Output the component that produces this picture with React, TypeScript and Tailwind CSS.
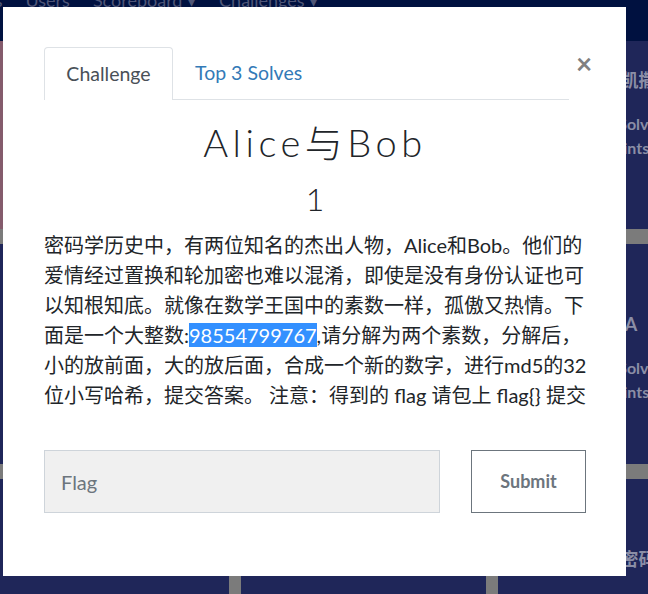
import React from 'react';

const cards = [
  { title: '签到题', solves: '3120 Solves', points: '1 points', solved: true },
  { title: 'base64', solves: '2840 Solves', points: '1 points' },
  { title: '古典凯撒', solves: '1986 Solves', points: '1 points' },
  { title: '栅栏密码', solves: '2311 Solves', points: '1 points' },
  { title: '摩斯电码', solves: '2407 Solves', points: '1 points' },
  { title: 'RSA', solves: '1750 Solves', points: '1 points' },
  { title: '换位密码', solves: '2077 Solves', points: '1 points' },
  { title: '维吉尼亚', solves: '2109 Solves', points: '1 points' },
  { title: '现代密码', solves: '2093 Solves', points: '1 points' },
];

function BackgroundCard({ title, solves, points, solved }: { title: string; solves: string; points: string; solved?: boolean }) {
  return (
    <div className={`flex flex-col items-center pt-[68px] text-[#8b8ea6] font-bold ${solved ? 'bg-[#845b6c]' : 'bg-[#1f2659]'}`}>
      <div className="text-[18px] leading-[24px]">{title}</div>
      <div className="mt-[20px] text-[16px] leading-[24px]">{solves}</div>
      <div className="text-[16px] leading-[24px]">{points}</div>
    </div>
  );
}

export default function App() {
  return (
    <div
      className="relative w-[648px] h-[594px] overflow-hidden bg-[#7b7b7b]"
      style={{ fontFamily: 'Lato, "Noto Sans CJK SC", sans-serif' }}
    >
      {/* Dimmed page behind the modal */}
      <nav className="relative z-10 h-[41px] bg-[#001140] flex items-start gap-[23px] text-[18px] leading-[18px] text-[#4f5677]">
        <span className="-ml-[47px] -mt-[9px]">Teams</span>
        <span className="-mt-[9px]">Users</span>
        <span className="-mt-[9px]">Scoreboard ▾</span>
        <span className="-mt-[9px]">Challenges ▾</span>
      </nav>
      <div className="-mt-[41px] -ml-[16px] grid grid-cols-[245px_245px_245px] grid-rows-[229px_220px_240px] gap-x-[12px] gap-y-[15px]">
        {cards.map((c) => (
          <BackgroundCard key={c.title} {...c} />
        ))}
      </div>

      {/* Modal */}
      <div className="absolute z-20 left-[3px] top-[7px] w-[623px] h-[569px] bg-white pl-[41px] pt-[40px] text-[#212529]">
        <div className="flex items-start">
          <div className="flex w-[525px] border-b border-[#dee2e6]">
            <div className="-mb-px h-[53px] w-[129px] flex items-center justify-center rounded-t-[4px] border border-b-0 border-[#dee2e6] bg-white text-[19.5px] text-[#495057]">
              Challenge
            </div>
            <div className="h-[52px] px-[22px] flex items-center text-[19.5px] text-[#337ab7]">
              Top 3 Solves
            </div>
          </div>
          <button className="ml-[5px] mt-[2px] w-[20px] text-[28px] leading-[28px] font-bold text-[#808080]">×</button>
        </div>

        <h1 className="mt-[18px] w-[542px] text-center text-[38px] leading-[48px] font-light tracking-[4.5px]">Alice与Bob</h1>
        <div className="mt-[14px] w-[542px] text-center text-[32px] leading-[38px] font-light">1</div>

        <p className="mt-[12px] w-[546px] text-[20px] leading-[30px]">
          密码学历史中，有两位知名的杰出人物，Alice和Bob。他们的爱情经过置换和轮加密也难以混淆，即使是没有身份认证也可以知根知底。就像在数学王国中的素数一样，孤傲又热情。下面是一个大整数:
          <span className="bg-[#3390ff] text-white">98554799767</span>
          ,请分解为两个素数，分解后，小的放前面，大的放后面，合成一个新的数字，进行md5的32
          <br />
          位小写哈希，提交答案。 注意：得到的 flag 请包上 flag{'{}'} 提交
        </p>

        <div className="mt-[40px] flex w-[542px] items-stretch">
          <input
            className="h-[63px] w-[396px] border border-[#ced4da] bg-[#f0f0f0] px-[16px] text-[20px] placeholder:text-[#6c757d] outline-none"
            placeholder="Flag"
          />
          <button className="ml-auto h-[63px] w-[115px] border border-[#6c757d] bg-white text-[18px] font-bold text-[#6c757d]">
            Submit
          </button>
        </div>
      </div>
    </div>
  );
}
